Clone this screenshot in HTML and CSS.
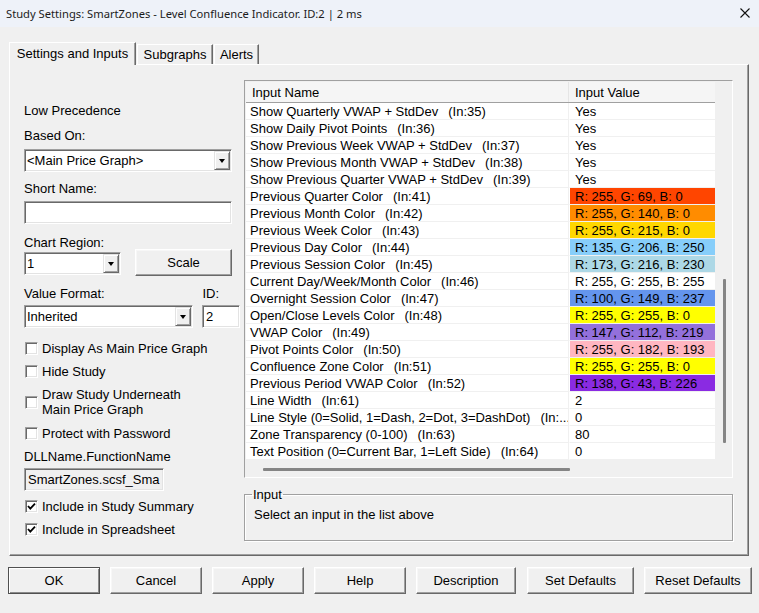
FILE: index.html
```html
<!DOCTYPE html>
<html>
<head>
<meta charset="utf-8">
<title>Study Settings</title>
<link rel="stylesheet" href="styles.css">
</head>
<body>
<div class="window">
  <div class="titlebar">
    <span class="title">Study Settings: SmartZones - Level Confluence Indicator. ID:2 | 2 ms</span>
    <svg class="close" viewBox="0 0 10 10" width="10" height="10"><path d="M0.5 0.5 L9.5 9.5 M9.5 0.5 L0.5 9.5" stroke="#111" stroke-width="1.1" fill="none"/></svg>
  </div>

  <div class="tabstrip">
    <div class="tab sel">Settings and Inputs</div>
    <div class="tab sub">Subgraphs</div>
    <div class="tab alerts">Alerts</div>
  </div>

  <div class="panel">
    <div class="left">
      <div class="lbl m-lp">Low Precedence</div>
      <div class="lbl m10">Based On:</div>
      <div class="combo full m6"><span class="ctext">&lt;Main Price Graph&gt;</span><span class="dd"><i class="tri"></i></span></div>
      <div class="lbl m9">Short Name:</div>
      <div class="edit full m5"></div>
      <div class="lbl m11 h14">Chart Region:</div>
      <div class="row2 mneg">
        <div class="combo region"><span class="ctext">1</span><span class="dd"><i class="tri"></i></span></div>
        <button class="btn scale">Scale</button>
      </div>
      <div class="lbl m11 vfrow"><span>Value Format:</span><span class="idlbl">ID:</span></div>
      <div class="row3 m4">
        <div class="combo vformat"><span class="ctext">Inherited</span><span class="dd"><i class="tri"></i></span></div>
        <div class="edit idbox"><span class="ctext">2</span></div>
      </div>
      <div class="cb m13"><span class="box"></span><span>Display As Main Price Graph</span></div>
      <div class="cb m8"><span class="box"></span><span>Hide Study</span></div>
      <div class="cb m8"><span class="box"></span><span>Draw Study Underneath<br>Main Price Graph</span></div>
      <div class="cb m9"><span class="box"></span><span>Protect with Password</span></div>
      <div class="lbl m8">DLLName.FunctionName</div>
      <div class="edit ro dll m4"><span class="ctext">SmartZones.scsf_Sma</span></div>
      <div class="cb m8"><span class="box"><svg viewBox="0 0 11 11" width="11" height="11"><path d="M2 5 L4.3 7.6 L9 2.6" stroke="#000" stroke-width="1.8" fill="none"/></svg></span><span>Include in Study Summary</span></div>
      <div class="cb m8"><span class="box"><svg viewBox="0 0 11 11" width="11" height="11"><path d="M2 5 L4.3 7.6 L9 2.6" stroke="#000" stroke-width="1.8" fill="none"/></svg></span><span>Include in Spreadsheet</span></div>
    </div>

    <div class="right">
      <div class="listbox">
        <div class="lb-main">
          <div class="lb-head">
            <div class="hname">Input Name</div>
            <div class="hval">Input Value</div>
          </div>
          <div class="lb-rows">
            <div class="r"><div class="n">Show Quarterly VWAP + StdDev<span class="in">(In:35)</span></div><div class="v">Yes</div></div>
            <div class="r"><div class="n">Show Daily Pivot Points<span class="in">(In:36)</span></div><div class="v">Yes</div></div>
            <div class="r"><div class="n">Show Previous Week VWAP + StdDev<span class="in">(In:37)</span></div><div class="v">Yes</div></div>
            <div class="r"><div class="n">Show Previous Month VWAP + StdDev<span class="in">(In:38)</span></div><div class="v">Yes</div></div>
            <div class="r"><div class="n">Show Previous Quarter VWAP + StdDev<span class="in">(In:39)</span></div><div class="v">Yes</div></div>
            <div class="r"><div class="n">Previous Quarter Color<span class="in">(In:41)</span></div><div class="v" style="background:rgb(255,69,0)">R: 255, G: 69, B: 0</div></div>
            <div class="r"><div class="n">Previous Month Color<span class="in">(In:42)</span></div><div class="v" style="background:rgb(255,140,0)">R: 255, G: 140, B: 0</div></div>
            <div class="r"><div class="n">Previous Week Color<span class="in">(In:43)</span></div><div class="v" style="background:rgb(255,215,0)">R: 255, G: 215, B: 0</div></div>
            <div class="r"><div class="n">Previous Day Color<span class="in">(In:44)</span></div><div class="v" style="background:rgb(135,206,250)">R: 135, G: 206, B: 250</div></div>
            <div class="r"><div class="n">Previous Session Color<span class="in">(In:45)</span></div><div class="v" style="background:rgb(173,216,230)">R: 173, G: 216, B: 230</div></div>
            <div class="r"><div class="n">Current Day/Week/Month Color<span class="in">(In:46)</span></div><div class="v" style="background:rgb(255,255,255)">R: 255, G: 255, B: 255</div></div>
            <div class="r"><div class="n">Overnight Session Color<span class="in">(In:47)</span></div><div class="v" style="background:rgb(100,149,237)">R: 100, G: 149, B: 237</div></div>
            <div class="r"><div class="n">Open/Close Levels Color<span class="in">(In:48)</span></div><div class="v" style="background:rgb(255,255,0)">R: 255, G: 255, B: 0</div></div>
            <div class="r"><div class="n">VWAP Color<span class="in">(In:49)</span></div><div class="v" style="background:rgb(147,112,219)">R: 147, G: 112, B: 219</div></div>
            <div class="r"><div class="n">Pivot Points Color<span class="in">(In:50)</span></div><div class="v" style="background:rgb(255,182,193)">R: 255, G: 182, B: 193</div></div>
            <div class="r"><div class="n">Confluence Zone Color<span class="in">(In:51)</span></div><div class="v" style="background:rgb(255,255,0)">R: 255, G: 255, B: 0</div></div>
            <div class="r"><div class="n">Previous Period VWAP Color<span class="in">(In:52)</span></div><div class="v" style="background:rgb(138,43,226)">R: 138, G: 43, B: 226</div></div>
            <div class="r"><div class="n">Line Width<span class="in">(In:61)</span></div><div class="v">2</div></div>
            <div class="r"><div class="n">Line Style (0=Solid, 1=Dash, 2=Dot, 3=DashDot)<span class="in">(In:...</span></div><div class="v">0</div></div>
            <div class="r"><div class="n">Zone Transparency (0-100)<span class="in">(In:63)</span></div><div class="v">80</div></div>
            <div class="r"><div class="n">Text Position (0=Current Bar, 1=Left Side)<span class="in">(In:64)</span></div><div class="v">0</div></div>
          </div>
          <div class="hscroll"><div class="hthumb"></div></div>
        </div>
        <div class="vscroll"><div class="vthumb"></div></div>
      </div>

      <fieldset class="group">
        <legend>Input</legend>
        <div class="gtext">Select an input in the list above</div>
      </fieldset>
    </div>
  </div>

  <div class="buttons">
    <button class="btn b92 default">OK</button>
    <button class="btn b92">Cancel</button>
    <button class="btn b92">Apply</button>
    <button class="btn b92">Help</button>
    <button class="btn b100">Description</button>
    <button class="btn b107 gap11">Set Defaults</button>
    <button class="btn b108">Reset Defaults</button>
  </div>
</div>
</body>
</html>
```

FILE: styles.css
```css
* { box-sizing: border-box; }
html, body { margin: 0; padding: 0; }
body {
  background: #f0f0f0;
  font-family: "Liberation Sans", Arial, sans-serif;
  font-size: 13px;
  color: #000;
}
.window { width: 759px; height: 613px; overflow: hidden; background: #f0f0f0; }

/* title bar */
.titlebar {
  height: 27px;
  background: #eef2f9;
  display: flex;
  align-items: center;
  padding-left: 6px;
  padding-bottom: 1px;
}
.title { font-family: "Noto Sans", "Open Sans", sans-serif; font-size: 11.2px; color: #1b1b1b; }
.close { margin-left: auto; margin-right: 9px; }

/* tabs */
.tabstrip {
  display: flex;
  align-items: flex-end;
  height: 22px;
  margin-top: 15px;
  padding-left: 9px;
  position: relative;
  z-index: 1;
}
.tab {
  height: 20px;
  padding-top: 2px;
  line-height: 15px;
  text-align: center;
  background: #f0f0f0;
  border-top: 1px solid #fff;
  border-left: 1px solid #fff;
  border-right: 1px solid #696969;
  box-shadow: inset -1px 0 #a0a0a0;
}
.tab.sel { width: 127px; height: 23px; margin-bottom: -1px; padding-top: 3px; }
.tab.sub { width: 76px; margin-left: 1px; }
.tab.alerts { width: 45px; margin-left: 1px; }

/* panel */
.panel {
  margin-left: 9px;
  width: 740px;
  height: 492px;
  border: 1px solid;
  border-color: #fff #696969 #696969 #fff;
  box-shadow: inset -1px -1px #a0a0a0;
  display: flex;
  padding-left: 14px;
}
.left { width: 216px; padding-top: 38px; display: flex; flex-direction: column; }
.right { width: 489px; margin-left: 4px; padding-top: 15px; display: flex; flex-direction: column; }

.lbl { height: 15px; line-height: 15px; white-space: nowrap; }
.h14 { height: 14px; }
.m4 { margin-top: 4px; }
.m5 { margin-top: 5px; }
.m6 { margin-top: 6px; }
.m8 { margin-top: 8px; }
.m9 { margin-top: 9px; }
.m10 { margin-top: 10px; }
.m11 { margin-top: 11px; }
.m13 { margin-top: 13px; }
.mneg { margin-top: 0; }

.combo, .edit {
  height: 23px;
  background: #fff;
  border: 1px solid;
  border-color: #a0a0a0 #fff #fff #a0a0a0;
  box-shadow: inset 1px 1px #696969, inset -1px -1px #e3e3e3;
  display: flex;
  align-items: center;
  overflow: hidden;
}
.full { width: 208px; }
.ctext { padding-left: 2px; line-height: 15px; white-space: nowrap; flex: 1; overflow: hidden; }
.dd {
  width: 16px;
  height: 19px;
  margin-right: 1px;
  background: #f0f0f0;
  border: 1px solid;
  border-color: #e3e3e3 #696969 #696969 #e3e3e3;
  box-shadow: inset 1px 1px #fff, inset -1px -1px #a0a0a0;
  display: flex;
  align-items: center;
  justify-content: center;
}
.tri {
  width: 0; height: 0;
  border-left: 3.5px solid transparent;
  border-right: 3.5px solid transparent;
  border-top: 4px solid #000;
  margin-top: 1px;
}

.row2 { display: flex; height: 26px; }
.region { width: 97px; margin-top: 3px; }
.scale { width: 97px; height: 25px; margin-left: 14px; }

.vfrow { display: flex; }
.idlbl { margin-left: auto; margin-right: 21px; }
.row3 { display: flex; }
.vformat { width: 169px; }
.idbox { width: 38px; margin-left: 9px; }
.idbox .ctext { padding-left: 3px; }

.ro { background: #f0f0f0; }
.dll { width: 140px; }
.dll .ctext { padding-left: 3px; }

.cb { display: flex; align-items: center; line-height: 15px; white-space: nowrap; }
.box {
  width: 13px; height: 13px;
  margin-left: 1px; margin-right: 4px;
  background: #fff;
  border: 1px solid;
  border-color: #a0a0a0 #fff #fff #a0a0a0;
  box-shadow: inset 1px 1px #696969, inset -1px -1px #e3e3e3;
  display: flex; align-items: center; justify-content: center;
  flex: none;
}
.box svg { display: block; }

/* list */
.listbox {
  height: 398px;
  border: 1px solid;
  border-color: #a0a0a0 #fff #fff #a0a0a0;
  padding: 1px 0 0 1px;
  display: flex;
  background: #f0f0f0;
}
.lb-main { width: 469px; display: flex; flex-direction: column; }
.lb-head {
  display: flex;
  height: 21px;
  background: #f5f5f5;
  border-bottom: 1px solid #a0a0a0;
  line-height: 21px;
}
.hname { width: 323px; padding-left: 6px; border-right: 1px solid #e5e5e5; }
.hval { width: 146px; padding-left: 6px; }
.lb-rows { background: #fff; }
.r { display: flex; height: 17px; }
.n {
  width: 323px;
  padding-left: 4px;
  border-right: 1px solid #f0f0f0;
  border-bottom: 1px solid #f0f0f0;
  line-height: 18px;
  white-space: nowrap;
  overflow: hidden;
}
.in { margin-left: 10px; }
.v {
  width: 146px;
  padding-left: 5px;
  border-left: 1px solid #fff;
  border-bottom: 1px solid #f0f0f0;
  line-height: 18px;
  white-space: nowrap;
  overflow: hidden;
}
.hscroll { height: 17px; padding-top: 8px; padding-left: 17px; }
.hthumb { width: 307px; height: 3px; background: #858585; border-radius: 1px; }
.vscroll { width: 17px; padding-top: 197px; padding-left: 8px; }
.vthumb { width: 3px; height: 164px; background: #858585; border-radius: 1px; }

/* group box */
.group {
  margin: 9px 0 0 0;
  padding: 0 8px 0 7px;
  height: 54px;
  border: 1px solid #a0a0a0;
  box-shadow: 1px 1px #fff, inset 1px 1px #fff;
}
.group legend { padding: 0 1px; line-height: 15px; }
.gtext { margin-top: 5px; padding-left: 2px; line-height: 15px; }

/* buttons */
.buttons { display: flex; margin-top: 11px; padding-left: 8px; gap: 10px; }
.btn {
  height: 27px;
  padding: 0;
  font-family: "Liberation Sans", Arial, sans-serif;
  font-size: 13px;
  color: #000;
  background: #f0f0f0;
  border: 1px solid;
  border-color: #fff #696969 #696969 #fff;
  box-shadow: inset -1px -1px #a0a0a0, inset 1px 1px #f7f7f7;
  text-align: center;
  line-height: 25px;
}
.btn.default { border-color: #505050; box-shadow: inset 1px 1px #fff, inset -1px -1px #8a8a8a; }
.b92 { width: 92px; }
.b100 { width: 100px; }
.b107 { width: 107px; }
.b108 { width: 108px; }
.gap11 { margin-left: 1px; }
```
